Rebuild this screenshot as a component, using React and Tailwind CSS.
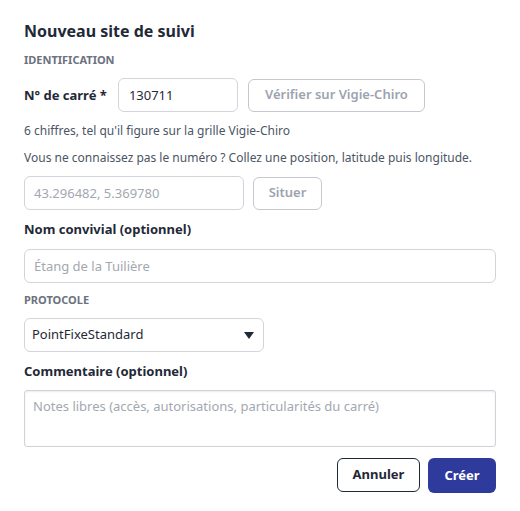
import { useState } from "react";

const font = { fontFamily: '"Noto Sans", "Liberation Sans", sans-serif' };

function Label({ children }) {
  return <div className="text-[13px] font-bold leading-5 text-[#1f2937]">{children}</div>;
}

function Section({ children }) {
  return (
    <div className="text-[11px] font-bold uppercase leading-4 text-[#6b7280]">
      {children}
    </div>
  );
}

export default function App() {
  const [carre, setCarre] = useState("130711");
  const [protocole, setProtocole] = useState("PointFixeStandard");

  return (
    <div className="min-h-screen bg-white px-6 pt-[19px]" style={font}>
      <h2 className="text-[16px] font-bold leading-6 text-[#1f2937]">Nouveau site de suivi</h2>

      <div className="mt-[9px]">
        <Section>Identification</Section>
      </div>

      {/* numéro de carré */}
      <div className="mt-[10px] flex items-center">
        <Label>N° de carré *</Label>
        <input
          value={carre}
          onChange={(e) => setCarre(e.target.value)}
          className="ml-[11px] h-[34px] w-[120px] rounded-md border border-[#d1d5db] px-[10px] text-[13px] text-[#1f2937] outline-none"
        />
        <button className="ml-[10px] h-[33px] w-[177px] rounded-md border border-[#c4c8cf] text-[13px] font-semibold text-[#9ca3af]">
          Vérifier sur Vigie-Chiro
        </button>
      </div>

      <p className="mt-[10px] text-[12px] leading-[18px] text-[#4b5563]">
        6 chiffres, tel qu'il figure sur la grille Vigie-Chiro
      </p>
      <p className="mt-[9px] text-[12px] leading-[18px] text-[#4b5563]">
        Vous ne connaissez pas le numéro ? Collez une position, latitude puis longitude.
      </p>

      <div className="mt-[9px] flex items-center gap-[9px]">
        <input
          placeholder="43.296482, 5.369780"
          className="h-[34px] w-[220px] rounded-md border border-[#d1d5db] px-[9px] text-[13px] text-[#1f2937] outline-none placeholder:text-[#a3a8b0]"
        />
        <button className="h-[33px] w-[69px] rounded-md border border-[#c4c8cf] text-[13px] font-semibold text-[#9ca3af]">
          Situer
        </button>
      </div>

      <div className="mt-[9px]">
        <Label>Nom convivial (optionnel)</Label>
      </div>
      <input
        placeholder="Étang de la Tuilière"
        className="mt-[10px] block h-[34px] w-[472px] rounded-md border border-[#d1d5db] px-[9px] text-[13px] text-[#1f2937] outline-none placeholder:text-[#a3a8b0]"
      />

      <div className="mt-[9px]">
        <Section>Protocole</Section>
      </div>
      <div className="relative mt-[10px] w-[240px]">
        <select
          value={protocole}
          onChange={(e) => setProtocole(e.target.value)}
          className="block h-[34px] w-full appearance-none rounded-md border border-[#d1d5db] bg-white pl-[7px] text-[13px] text-[#1f2937] outline-none"
          style={font}
        >
          <option>PointFixeStandard</option>
          <option>Pédestre</option>
          <option>Routier</option>
        </select>
        <svg className="pointer-events-none absolute right-[10px] top-[14px]" width="10" height="7" viewBox="0 0 10 7">
          <path d="M0 0h10L5 7z" fill="#1f2937" />
        </svg>
      </div>

      <div className="mt-[9px]">
        <Label>Commentaire (optionnel)</Label>
      </div>
      <textarea
        placeholder="Notes libres (accès, autorisations, particularités du carré)"
        className="mt-[9px] block h-[57px] w-[472px] resize-none rounded-[3px] border border-[#cfd3d9] px-[8px] py-[5px] text-[13px] leading-5 text-[#1f2937] shadow-[inset_0_1px_2px_rgba(0,0,0,0.08)] outline-none placeholder:text-[#a3a8b0]"
        style={font}
      />

      <div className="mt-[11px] flex w-[472px] justify-end gap-2">
        <button className="h-[34px] w-[83px] rounded-md border border-[#1f2937] bg-white text-[13px] font-bold text-[#1f2937]">
          Annuler
        </button>
        <button className="h-[35px] w-[68px] rounded-md bg-[#2f3b9c] text-[13px] font-bold text-white">
          Créer
        </button>
      </div>
    </div>
  );
}
